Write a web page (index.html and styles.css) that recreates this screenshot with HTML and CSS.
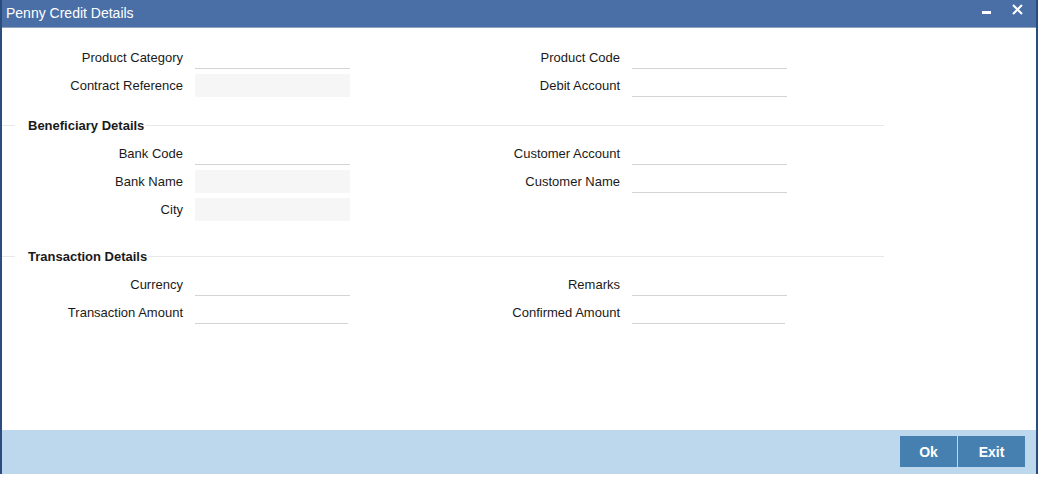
FILE: index.html
```html
<!DOCTYPE html>
<html lang="en">
<head>
    <meta charset="UTF-8">
    <title>Penny Credit Details</title>
    <link rel="stylesheet" href="styles.css">
</head>
<body>
    <div class="window">
        <div class="titlebar">
            <span class="title">Penny Credit Details</span>
            <div class="win-buttons">
                <span class="minimize"></span>
                <svg class="close" width="11" height="11" viewBox="0 0 11 11">
                    <path d="M1 1 L10 10 M10 1 L1 10" stroke="#fff" stroke-width="2"/>
                </svg>
            </div>
        </div>

        <div class="content">
            <div class="grid">
                <label>Product Category</label>
                <input type="text">
                <label>Product Code</label>
                <input type="text">

                <label>Contract Reference</label>
                <input type="text" class="readonly" readonly>
                <label>Debit Account</label>
                <input type="text">
            </div>

            <div class="section-head section-first">
                <span>Beneficiary Details</span>
            </div>

            <div class="grid">
                <label>Bank Code</label>
                <input type="text">
                <label>Customer Account</label>
                <input type="text">

                <label>Bank Name</label>
                <input type="text" class="readonly" readonly>
                <label>Customer Name</label>
                <input type="text">

                <label>City</label>
                <input type="text" class="readonly" readonly>
            </div>

            <div class="section-head section-second">
                <span>Transaction Details</span>
            </div>

            <div class="grid">
                <label>Currency</label>
                <input type="text">
                <label>Remarks</label>
                <input type="text">

                <label>Transaction Amount</label>
                <input type="text" class="short">
                <label>Confirmed Amount</label>
                <input type="text" class="short">
            </div>
        </div>

        <div class="footer">
            <button class="btn">Ok</button>
            <button class="btn">Exit</button>
        </div>
    </div>
</body>
</html>
```

FILE: styles.css
```css
body {
    margin: 0;
    padding: 0;
    background: #fff;
    font-family: "Liberation Sans", Arial, sans-serif;
    font-size: 13px;
    color: #1a1a1a;
}

.window {
    width: 1034px;
    height: 474px;
    border-left: 2px solid #2b4c7e;
    border-right: 2px solid #2b4c7e;
    display: flex;
    flex-direction: column;
    background: #fff;
}

.titlebar {
    height: 27px;
    background-color: #4a6fa7;
    border-bottom: 1px solid #8fa3ba;
    display: flex;
    align-items: center;
    justify-content: space-between;
}

.title {
    color: #fff;
    font-size: 14px;
    padding-left: 4px;
    padding-bottom: 1px;
}

.win-buttons {
    display: flex;
    align-items: flex-start;
    height: 27px;
    padding-right: 13px;
}

.minimize {
    display: block;
    width: 9px;
    height: 3px;
    background: #fff;
    margin-top: 11px;
    margin-right: 21px;
}

.close {
    display: block;
    margin-top: 4px;
}

.content {
    flex: 1;
    padding-top: 18px;
}

.grid {
    display: grid;
    grid-template-columns: 181px 155px 258px 155px;
    grid-auto-rows: 23px;
    column-gap: 12px;
    row-gap: 5px;
}

.grid label {
    text-align: right;
    line-height: 23px;
    white-space: nowrap;
}

.grid input {
    box-sizing: border-box;
    width: 155px;
    height: 23px;
    margin: 0;
    padding: 0 4px;
    border: none;
    border-bottom: 1px solid #d4d4d4;
    background: #fff;
    font-family: inherit;
    font-size: 13px;
    outline: none;
}

.grid input.readonly {
    background: #f6f6f6;
    border-bottom-color: #f6f6f6;
}

.grid input.short {
    width: 153px;
}

.section-head {
    display: flex;
    align-items: center;
    width: 882px;
    height: 16px;
    font-weight: bold;
}

.section-head::before {
    content: "";
    width: 13px;
    border-top: 1px solid #e8e8e8;
}

.section-head span {
    margin-left: 13px;
    margin-right: 1px;
}

.section-head::after {
    content: "";
    flex: 1;
    border-top: 1px solid #e8e8e8;
}

.section-first {
    margin-top: 20px;
    margin-bottom: 9px;
}

.section-second {
    margin-top: 27px;
    margin-bottom: 9px;
}

.footer {
    height: 44px;
    background-color: #bdd8ec;
    display: flex;
    align-items: flex-start;
    justify-content: flex-end;
    padding-right: 11px;
}

.btn {
    margin-top: 6px;
    height: 31px;
    border: none;
    background-color: #4680b1;
    color: #fff;
    font-family: "Liberation Sans", Arial, sans-serif;
    font-size: 14px;
    font-weight: bold;
    cursor: pointer;
}

.btn:first-child {
    width: 57px;
    margin-right: 1px;
}

.btn:last-child {
    width: 67px;
}
```
